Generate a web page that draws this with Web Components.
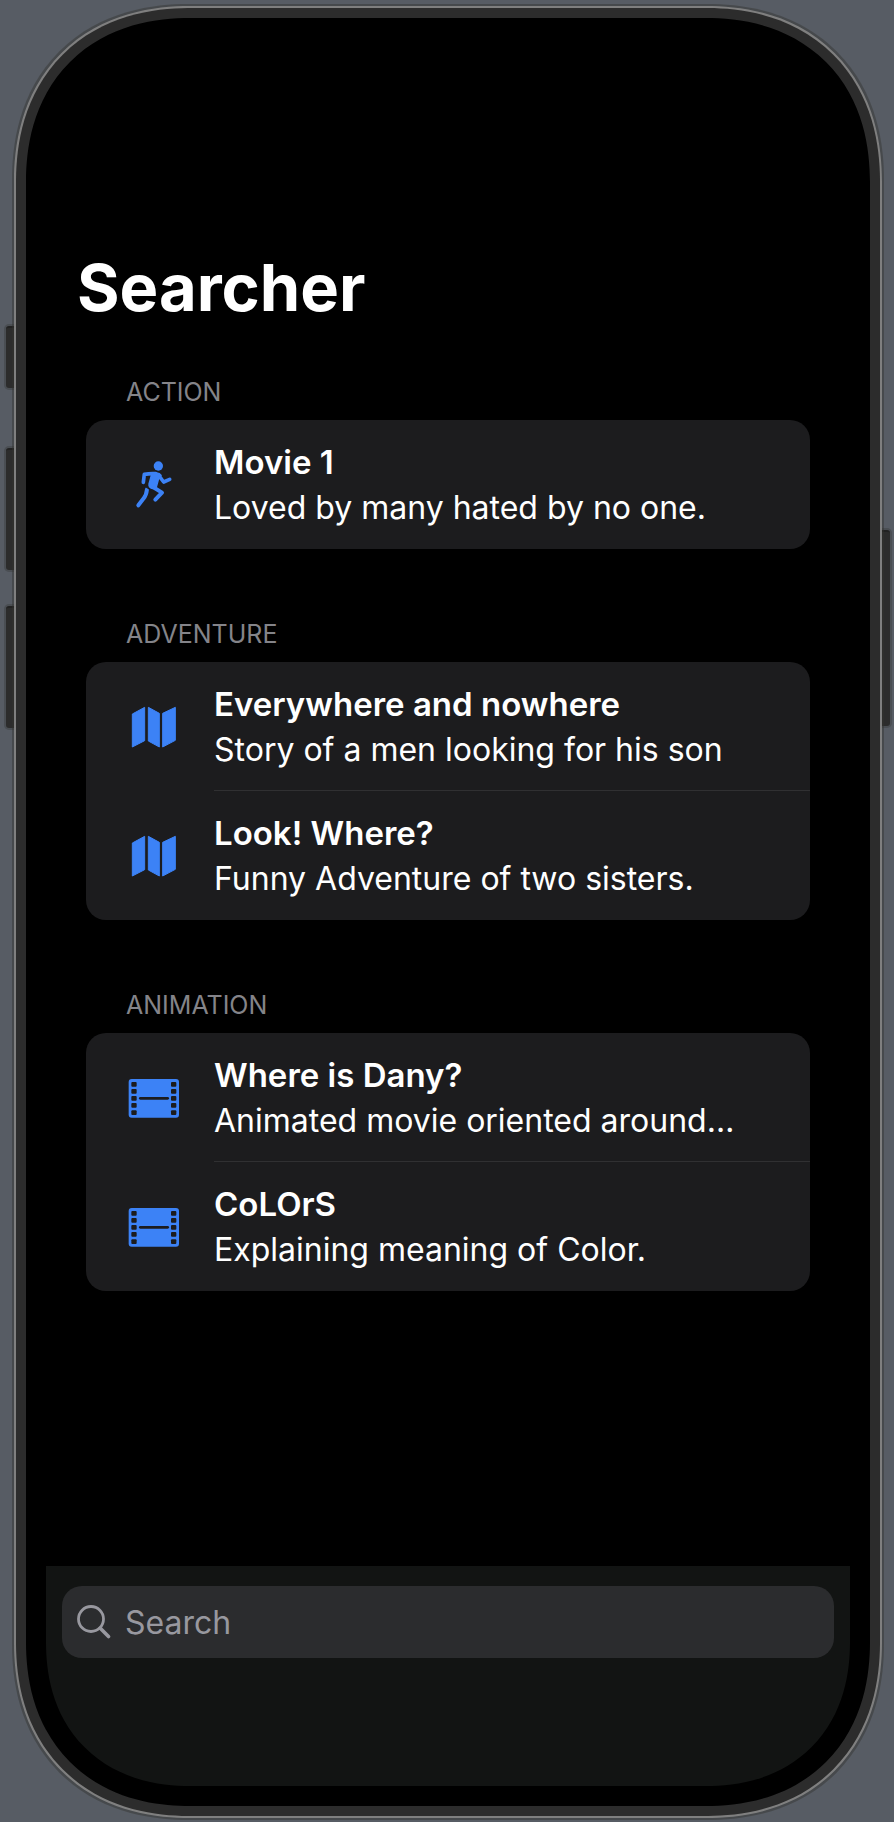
<!DOCTYPE html>
<html lang="en">
<head>
<meta charset="utf-8">
<meta name="viewport" content="width=device-width, initial-scale=1">
<title>Searcher</title>
<style>
  body { margin: 0; background: #575c64; font-family: Inter, "Liberation Sans", sans-serif; color: #fff; }
</style>
</head>
<body>
<device-frame>
  <searcher-app>
    <movie-section heading="Action">
      <movie-row icon="run"><span slot="title">Movie 1</span>Loved by many hated by no one.</movie-row>
    </movie-section>
    <movie-section heading="Adventure">
      <movie-row icon="map"><span slot="title">Everywhere and nowhere</span>Story of a men looking for his son</movie-row>
      <movie-row icon="map"><span slot="title">Look! Where?</span>Funny Adventure of two sisters.</movie-row>
    </movie-section>
    <movie-section heading="Animation">
      <movie-row icon="film"><span slot="title">Where is Dany?</span>Animated movie oriented around…</movie-row>
      <movie-row icon="film"><span slot="title">CoLOrS</span>Explaining meaning of Color.</movie-row>
    </movie-section>
    <search-bar slot="footer"></search-bar>
  </searcher-app>
</device-frame>
<script>
const define = (name, html, setup) => customElements.define(name, class extends HTMLElement {
  constructor() {
    super();
    this.attachShadow({ mode: 'open' }).innerHTML = html;
  }
  connectedCallback() { if (setup) setup(this, this.shadowRoot); }
});

define('device-frame', `
  <style>
    :host { display: grid; grid-template-columns: 14px minmax(0, 1fr) 12px; box-sizing: border-box; min-height: 100vh; padding: 6px 0 4px; }
    .rail { display: flex; flex-direction: column; align-items: flex-end; }
    .left { padding-top: 320px; }
    .right { padding-top: 524px; align-items: flex-start; }
    .key { width: 8px; height: 122px; box-sizing: border-box; background: #2c2c2c; border-top: 2px solid #222; border-radius: 3px 0 0 3px; box-shadow: 0 0 0 2px #4a4e53; }
    .mute { height: 62px; margin-bottom: 60px; }
    .up { margin-bottom: 36px; }
    .power { height: 196px; border-radius: 0 3px 3px 0; }
    .shell { position: relative; display: flex; border: 2px solid #7f7f7f; background: #2c2c2c; padding: 10px; border-radius: 157px; box-shadow: 0 0 0 2px rgba(50, 50, 46, .45); }
    .glass { flex: 1; min-width: 0; display: flex; background: #000; padding: 20px; border-radius: 145px; }
    .screen { flex: 1; min-width: 0; display: flex; border-radius: 125px; overflow: hidden; }
    ::slotted(*) { flex: 1; min-width: 0; }
    @supports (corner-shape: superellipse(1.15)) {
      .shell, .glass, .screen { corner-shape: superellipse(1.15); }
      .shell { border-radius: 176px; }
      .glass { border-radius: 164px; }
      .screen { border-radius: 144px; }
    }
  </style>
  <div class="rail left"><div class="key mute"></div><div class="key up"></div><div class="key"></div></div>
  <div class="shell"><div class="glass"><div class="screen"><slot></slot></div></div></div>
  <div class="rail right"><div class="key power"></div></div>`);

define('searcher-app', `
  <style>
    :host { display: flex; flex-direction: column; }
    main { display: flex; flex-direction: column; padding: 208px 40px 48px; }
    h1 { margin: 0 -9px 46px; font-size: 65px; line-height: 84px; font-weight: 700; }
    .list { display: flex; flex-direction: column; gap: 69px; }
    footer { margin-top: auto; }
  </style>
  <main><h1>Searcher</h1><div class="list"><slot></slot></div></main>
  <footer><slot name="footer"></slot></footer>`);

define('movie-section', `
  <style>
    :host { display: block; }
    h2 { margin: 0 0 12px; padding-left: 40px; font-size: 25px; line-height: 32px; font-weight: 400; color: #848489; text-transform: uppercase; }
    .card { background: #1c1c1e; border-radius: 20px; overflow: hidden; }
  </style>
  <section><h2></h2><div class="card"><slot></slot></div></section>`,
  (el, root) => { root.querySelector('h2').textContent = el.getAttribute('heading'); });

const icons = {
  run: `<circle cx="121" cy="54" r="14" fill="currentColor"/>
    <g fill="none" stroke="currentColor" stroke-width="11" stroke-linecap="round" stroke-linejoin="round">
      <path d="M76 103 79 79 Q95 76 113 77"/><path d="M122 82 137 102 155 94"/>
      <path d="M100 114 132 134 112 155" stroke-width="12"/>
    </g>
    <path d="M87 124 Q85 142 77 151 L61 172" fill="none" stroke="currentColor" stroke-width="12" stroke-linecap="round"/>
    <path d="M98 73H116Q126 73 132 82L124 92 117 118 103 124Q89 120 91 107L98 82Z" fill="currentColor"/>
    <path d="M80 113 102 129" stroke="#1c1c1e" stroke-width="4"/>`,
  map: `<path fill="currentColor" stroke="currentColor" stroke-width="3" stroke-linejoin="round" d="M43 72 80 52V152L43 171ZM91 52 124 70V171L91 153ZM134 70 172 52V151L134 171Z"/>`,
  film: `<rect x="32" y="54" width="151" height="116" rx="9" fill="currentColor"/>
    <g fill="#1c1c1e">${[48, 167].map(x => [70, 91, 112, 133, 155].map(y =>
      `<rect x="${x - 8}" y="${y - 7}" width="16" height="14" rx="3"/>`).join('')).join('')}
      <rect x="63" y="108" width="90" height="8" rx="4"/></g>`
};

define('movie-row', `
  <style>
    :host { display: block; }
    .row { display: flex; align-items: center; gap: 24px; padding-left: 32px; }
    svg { flex: none; width: 72px; height: 72px; color: #3c82f6; }
    .text { flex: 1; min-width: 0; padding: 20px 32px 19px 0; font-size: 32px; line-height: 45px; }
    .divided { box-shadow: 0 -1px #303032; }
    .text > * { overflow: hidden; text-overflow: ellipsis; white-space: nowrap; }
    .title { font-size: 33px; font-weight: 600; }
  </style>
  <div class="row">
    <svg viewBox="0 3 216 216" aria-hidden="true"></svg>
    <div class="text"><div class="title"><slot name="title"></slot></div><div><slot></slot></div></div>
  </div>`,
  (el, root) => {
    root.querySelector('svg').innerHTML = icons[el.getAttribute('icon')];
    if (el.previousElementSibling) root.querySelector('.text').classList.add('divided');
  });

define('search-bar', `
  <style>
    :host { display: block; background: #121413; padding: 20px 16px 128px; }
    label { display: flex; align-items: center; gap: 14px; height: 72px; padding: 0 15px; background: #2b2c2e; border-radius: 20px; color: #98989f; }
    svg { flex: none; width: 34px; height: 34px; }
    input { flex: 1; min-width: 0; height: 48px; padding: 2px 0 0; border: 0; outline: 0; background: none; color: #fff; font: 400 32px/48px Inter, "Liberation Sans", sans-serif; }
    input::placeholder { color: #98989f; opacity: 1; }
  </style>
  <label>
    <svg viewBox="0 0 34 34" fill="none" stroke="currentColor" stroke-linecap="round" aria-hidden="true"><circle cx="14" cy="14" r="12.5" stroke-width="2.8"/><path d="M23.3 23.3 31.5 31.5" stroke-width="3.6"/></svg>
    <input type="text" placeholder="Search" aria-label="Search">
  </label>`);
</script>
</body>
</html>
